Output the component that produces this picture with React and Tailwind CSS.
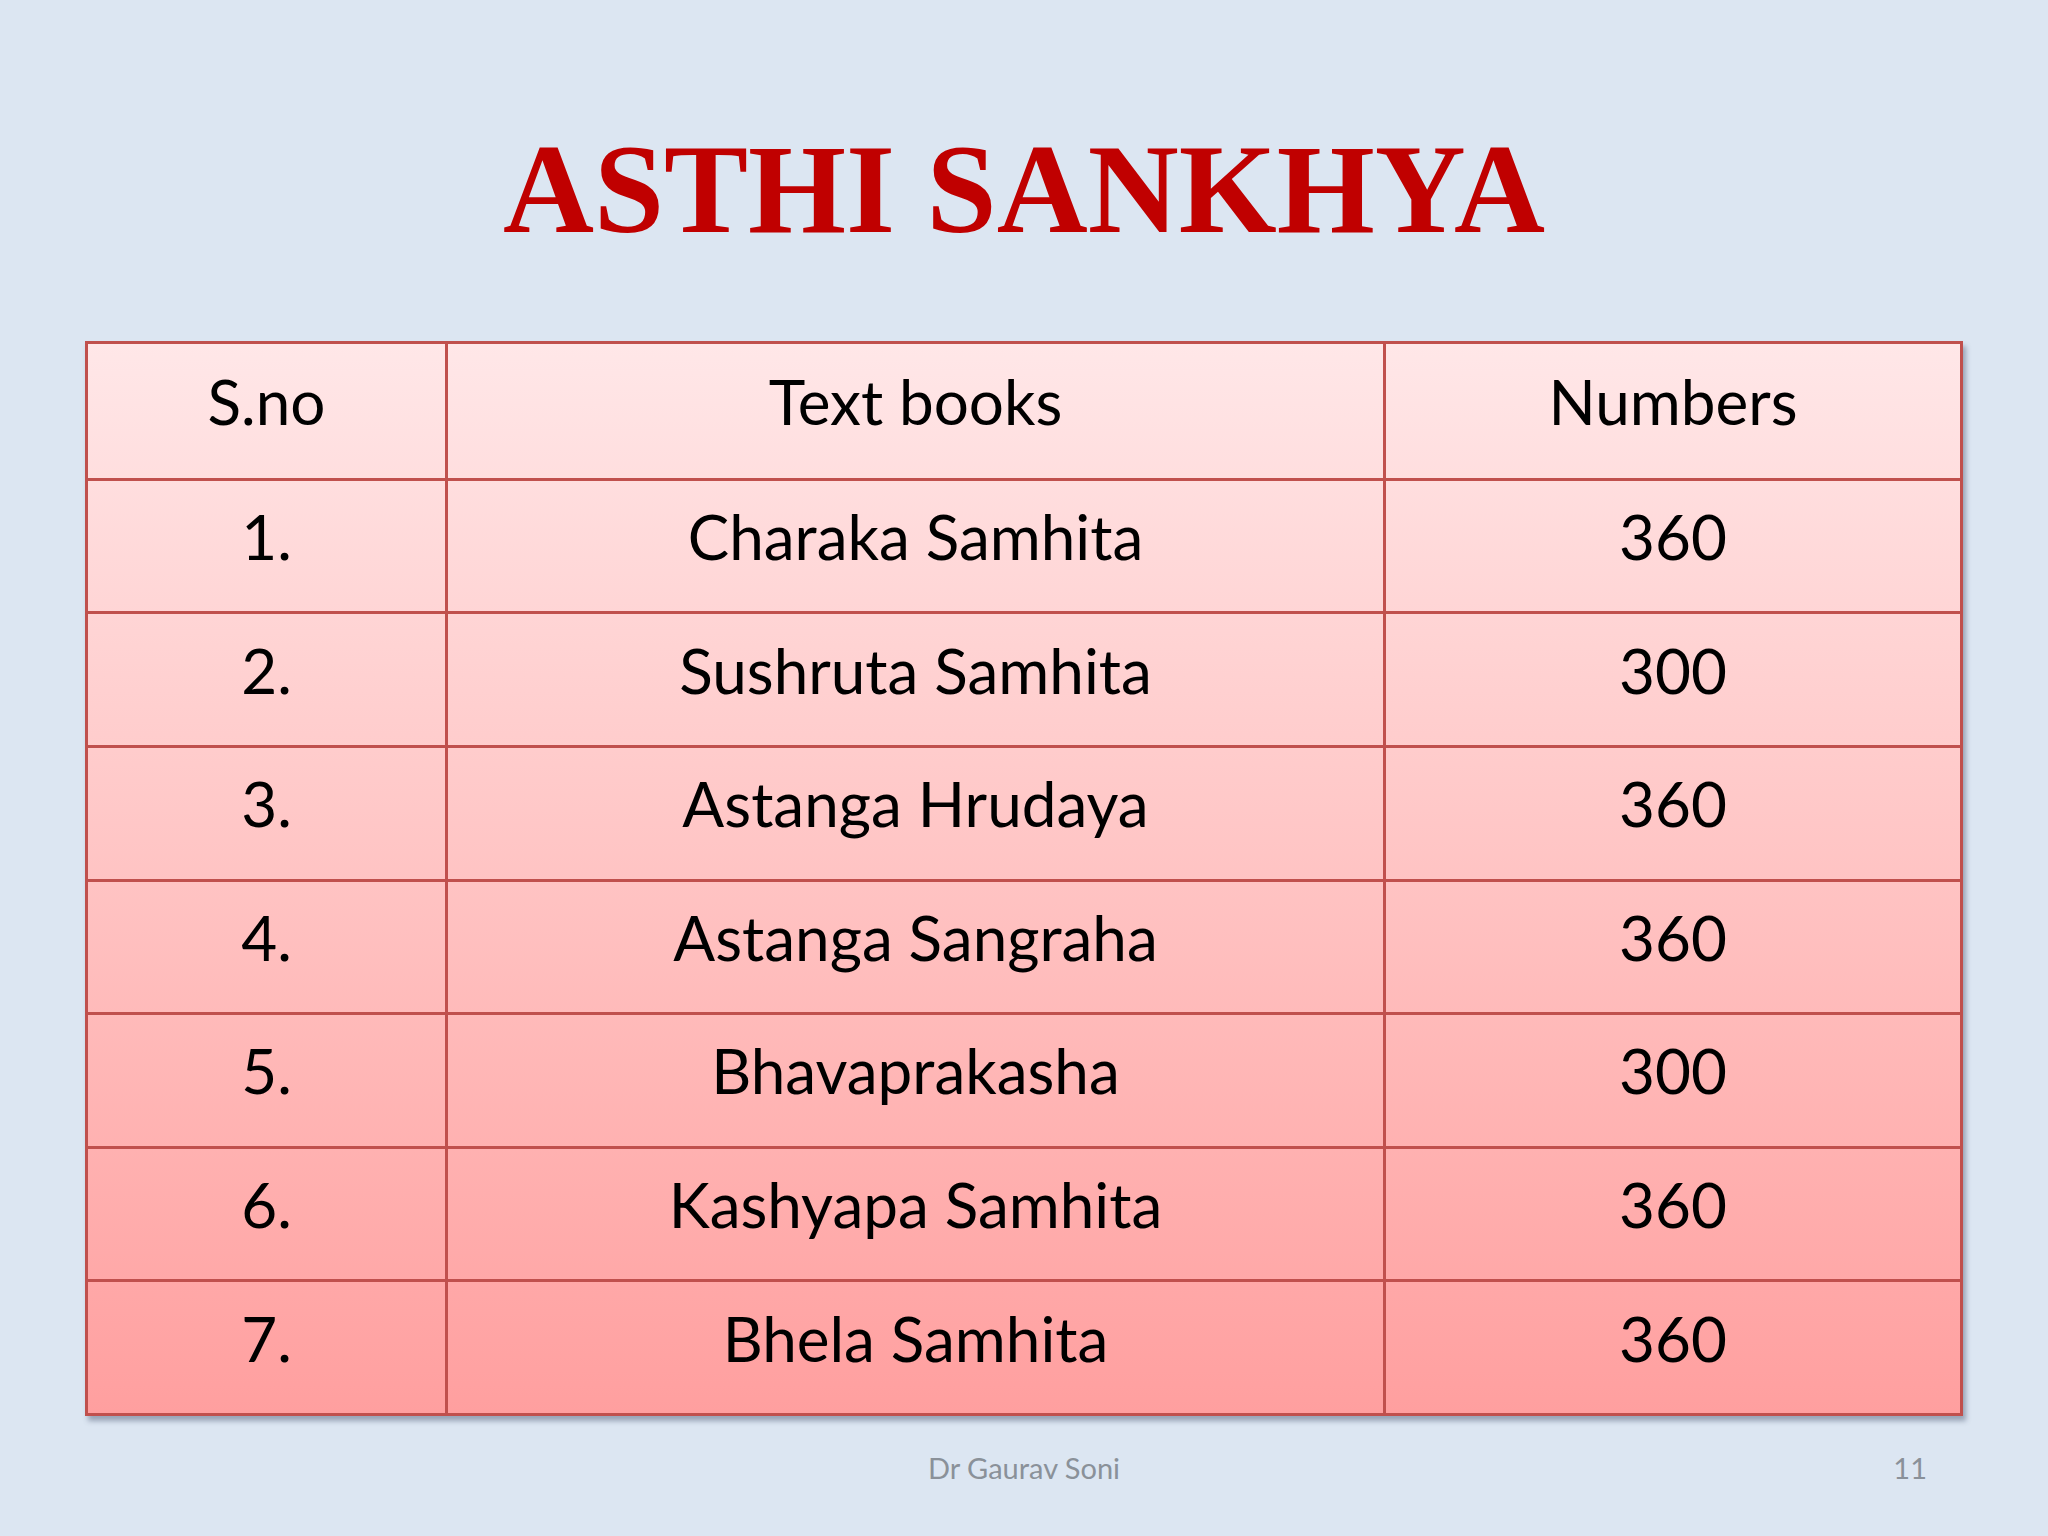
import React from 'react';

const rows = [
  ['1.', 'Charaka Samhita', '360'],
  ['2.', 'Sushruta Samhita', '300'],
  ['3.', 'Astanga Hrudaya', '360'],
  ['4.', 'Astanga Sangraha', '360'],
  ['5.', 'Bhavaprakasha', '300'],
  ['6.', 'Kashyapa Samhita', '360'],
  ['7.', 'Bhela Samhita', '360'],
];

function Cell({ children, first }) {
  return (
    <div
      className={`flex items-center justify-center pb-[20px] border-[#c0504d] ${first ? '' : 'border-l-[3px]'}`}
    >
      {children}
    </div>
  );
}

function Row({ cells, top }) {
  return (
    <div
      className={`grid grid-cols-[357px_938px_1fr] border-[#c0504d] ${top ? '' : 'border-t-[3px]'}`}
    >
      <Cell first>{cells[0]}</Cell>
      <Cell>{cells[1]}</Cell>
      <Cell>{cells[2]}</Cell>
    </div>
  );
}

export default function App() {
  return (
    <div className="w-[2048px] h-[1536px] bg-[#dce6f2] overflow-hidden flex flex-col">
      {/* Title */}
      <h1
        className="pt-[127px] text-center text-[126px] leading-none font-bold text-[#c00000]"
        style={{ fontFamily: '"Liberation Serif", "Times New Roman", serif' }}
      >
        ASTHI SANKHYA
      </h1>

      {/* Table */}
      <div
        className="mt-[88px] ml-[85px] w-[1878px] h-[1075px] grid grid-rows-8 border-[3px] border-[#c0504d] bg-gradient-to-b from-[#ffe7e8] to-[#ff9f9f] shadow-[3px_5px_5px_rgba(70,85,110,0.45)] text-black text-[62px] leading-none"
        style={{ fontFamily: 'Lato, "Open Sans", sans-serif' }}
      >
        <Row top cells={['S.no', 'Text books', 'Numbers']} />
        {rows.map((r) => (
          <Row key={r[0]} cells={r} />
        ))}
      </div>

      {/* Footer */}
      <div
        className="mt-[37px] grid grid-cols-[1fr_auto_1fr] text-[29px] leading-none text-[#8a9199]"
        style={{ fontFamily: 'Lato, "Open Sans", sans-serif' }}
      >
        <div></div>
        <div>Dr Gaurav Soni</div>
        <div className="text-right pr-[121px]">11</div>
      </div>
    </div>
  );
}
